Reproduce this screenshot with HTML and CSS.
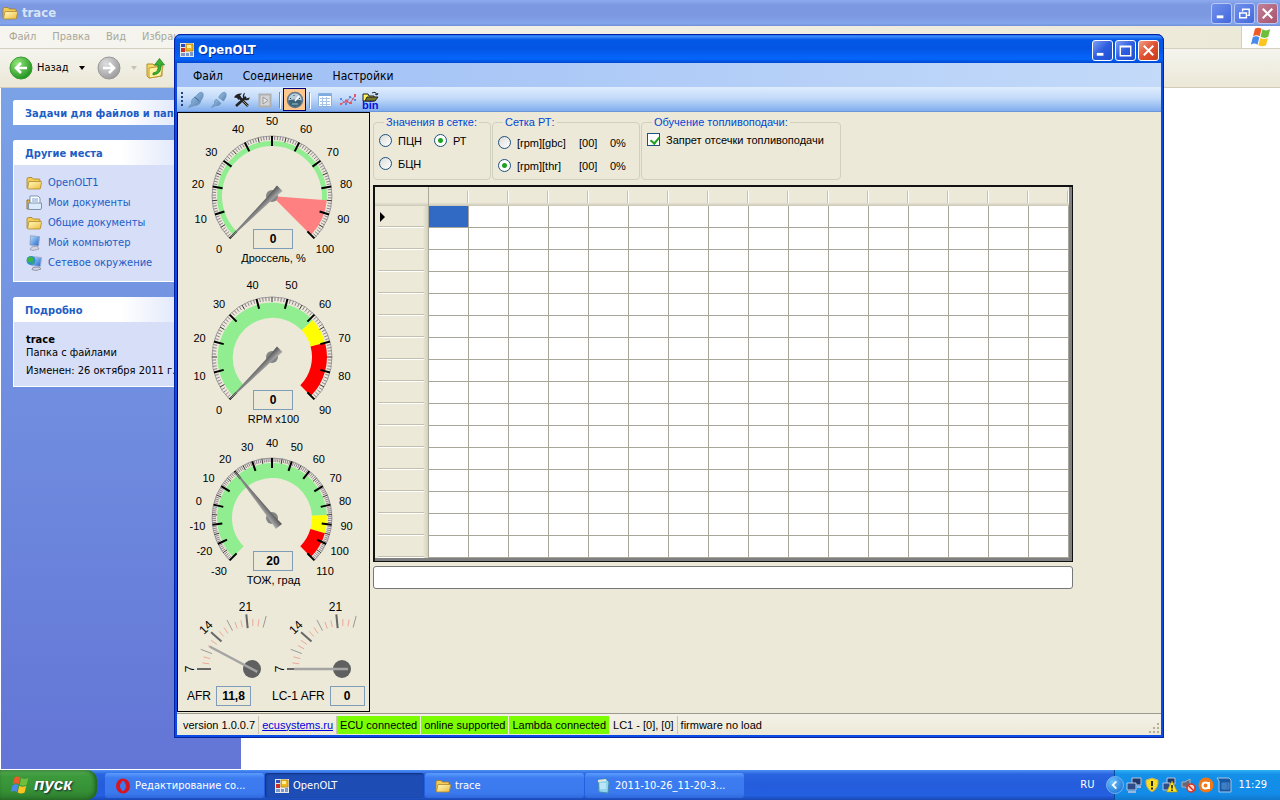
FILE: index.html
```html
<!DOCTYPE html>
<html lang="ru">
<head>
<meta charset="utf-8">
<title>OpenOLT</title>
<link rel="stylesheet" href="styles.css">
</head>
<body>
<svg class="defs" aria-hidden="true">
  <defs>
    <linearGradient id="gFold" x1="0" y1="0" x2="1" y2="1"><stop offset="0" stop-color="#fffbc4"/><stop offset="1" stop-color="#eebc3c"/></linearGradient>
    <linearGradient id="gNeedle" x1="0" y1="0" x2="0" y2="1"><stop offset="0" stop-color="#b4b4b4"/><stop offset="1" stop-color="#505050"/></linearGradient>
    <linearGradient id="gScreen" x1="0" y1="0" x2="1" y2="1"><stop offset="0" stop-color="#bfe2ff"/><stop offset="1" stop-color="#1c64cc"/></linearGradient>
    <linearGradient id="gPlug" x1="0" y1="0" x2="1" y2="1"><stop offset="0" stop-color="#a9c8e6"/><stop offset="1" stop-color="#4d7eb0"/></linearGradient>
    <radialGradient id="gGreen" cx=".35" cy=".3" r=".8"><stop offset="0" stop-color="#92e878"/><stop offset="1" stop-color="#168a16"/></radialGradient>
    <radialGradient id="gGray" cx=".35" cy=".3" r=".8"><stop offset="0" stop-color="#dedede"/><stop offset="1" stop-color="#969696"/></radialGradient>
  </defs>
  <symbol id="folder" viewBox="0 0 16 16"><path d="M1 4q0-1.500 1.500-1.500h3.500l1.500 1.500h5.500q1 0 1 1v8.500H2q-1 0-1-1z" fill="#f2cc58" stroke="#a67c20" stroke-width=".8"/><path d="M3 6.500h12q.8 0 .6 1l-1.200 5.500q-.2 1-1 1H2.500q-1 0-.9-1z" fill="url(#gFold)" stroke="#b08828" stroke-width=".8"/></symbol>
  <symbol id="docs" viewBox="0 0 16 16"><path d="M1 5h3v9H1z" fill="#e8bb48" stroke="#9a741e"/><path d="M4 1h8l2 2v9H4z" fill="#fff" stroke="#7d92b5"/><path d="M6 4h6M6 6h6" stroke="#78a0d8"/><path d="M2.500 8h13v5q0 1.500-1.500 1.500H4q-1.500 0-1.500-1.500z" fill="#dcebfa" stroke="#8093ae"/></symbol>
  <symbol id="computer" viewBox="0 0 16 16"><path d="M4.500 .7l9 1-1 9.300-8.500-1z" fill="url(#gScreen)" stroke="#8ea6cc"/><path d="M6 12l5-1 2 3-6 1.500-3-1z" fill="#d4d4e4" stroke="#8e8ea4" stroke-width=".7"/></symbol>
  <symbol id="network" viewBox="0 0 16 16"><path d="M5 1.500l10.500 1-1 9-9-1z" fill="url(#gScreen)" stroke="#a0b2d0"/><circle cx="5" cy="5.500" r="4.500" fill="#2a8fd0"/><path d="M2 3q3-3 5 0t-2 4-4-1zM5 8l3-1-1 2z" fill="#3fb43f"/><path d="M7 12.500l6-.5 2 2-5 1.500-4-1z" fill="#d4d4e4" stroke="#77778c" stroke-width=".7"/></symbol>
  <symbol id="formicon" viewBox="0 0 14 14"><path d="M0 0h14v14H0z" fill="#e8e8e8"/><path d="M1 1h4v3H1z" fill="#2c50b8"/><path d="M1 5h4v4H1z" fill="#c83028"/><path d="M6 1h7v7H6z" fill="#f0b820" stroke="#b88410" stroke-width=".8"/><path d="M7 2h4v3H7z" fill="#fff09c"/><path d="M1 10h4v3H1zM6 10h3v3H6zM10 9h3v4h-3z" fill="#7c98cc"/></symbol>
  <symbol id="flag" viewBox="0 0 20 20"><path d="M4.500 2.500q3-2 6 0L8.800 9.300q-3-2-6 0z" fill="#ee5a28"/><path d="M11.300 3q3 2 7 0L16.600 9.800q-3.500 2-7 0z" fill="#6cc03c"/><path d="M2.500 10.300q3-2 6 0L6.800 17q-3-2-6 0z" fill="#4a8ae8"/><path d="M9.300 10.800q3.500 2 7 0L14.600 17.500q-3.500 2-7 0z" fill="#fcc420"/></symbol>
  <symbol id="plug" viewBox="0 0 18 18"><path d="M1.500 16.500l3-4q-.5-4 2.500-6 2-1 3-2.500 2-2.500 4.500-3l1.500 1.500q1 3-2 7-.500 4-5 5-3 0-4 1z" fill="url(#gPlug)" stroke="#6b93bc" stroke-width=".8"/><path d="M7.500 6.500q3 .5 4.500 4" fill="none" stroke="#3c6a98"/></symbol>
</svg>
<main class="desktop">
  <section class="explorer" aria-label="trace">
    <header class="ex-title">
      <svg class="i16"><use href="#folder"/></svg><h1>trace</h1>
      <div class="winbtns"><button class="wb dim" aria-label="Свернуть"><svg viewBox="0 0 20 20"><path d="M5 13.500h7" stroke-width="3"/></svg></button><button class="wb dim" aria-label="Восстановить"><svg viewBox="0 0 20 20"><path d="M8 8V5.500h7V12h-2M5 9.500h7v5H5z" stroke-width="1.500"/></svg></button><button class="wb dim red" aria-label="Закрыть"><svg viewBox="0 0 20 20"><path d="M5 5l10 10m0-10l-10 10" stroke-width="2.200"/></svg></button></div>
    </header>
    <nav class="ex-menu"><span>Файл</span><span>Правка</span><span>Вид</span><span>Избранное</span><div class="throbber"><svg class="i22"><use href="#flag"/></svg></div></nav>
    <div class="ex-tools">
      <button class="back"><svg class="i24" viewBox="0 0 24 24"><circle cx="12" cy="12" r="11" fill="url(#gGreen)" stroke="#3a9a34"/><path d="M18 12H7m5-5l-5 5 5 5" fill="none" stroke="#fff" stroke-width="2.600"/></svg>Назад<i class="caret"></i></button>
      <button class="fwd" aria-label="Вперед"><svg class="i24" viewBox="0 0 24 24"><circle cx="12" cy="12" r="11" fill="url(#gGray)" stroke="#999"/><path d="M6 12h11m-5-5l5 5-5 5" fill="none" stroke="#fff" stroke-width="2.600"/></svg><i class="caret pale"></i></button>
      <button class="up" aria-label="Вверх"><svg class="i22" viewBox="0 0 22 22"><path d="M2 7h6l2 2h7v10l-13 2-2-2z" fill="#f6d868" stroke="#b08c2c"/><path d="M4 11l14-2-2 10-12 2z" fill="#fff2a0" stroke="#c09c34"/><path d="M8 16q6-1 5-8H9.500l5-6.500 5 6.500H16q1 9-8 10z" fill="#38b030" stroke="#1c7a1c" stroke-width=".7"/></svg></button>
    </div>
    <div class="ex-body">
      <aside class="tasks">
        <section class="tp"><h2>Задачи для файлов и папок</h2></section>
        <section class="tp"><h2>Другие места</h2>
          <ul class="places">
            <li><a href="#"><svg class="i16"><use href="#folder"/></svg>OpenOLT1</a></li>
            <li><a href="#"><svg class="i16"><use href="#docs"/></svg>Мои документы</a></li>
            <li><a href="#"><svg class="i16"><use href="#folder"/></svg>Общие документы</a></li>
            <li><a href="#"><svg class="i16"><use href="#computer"/></svg>Мой компьютер</a></li>
            <li><a href="#"><svg class="i16"><use href="#network"/></svg>Сетевое окружение</a></li>
          </ul></section>
        <section class="tp"><h2>Подробно</h2><div class="details"><b>trace</b><span>Папка с файлами</span><p>Изменен: 26 октября 2011 г.,</p></div></section>
      </aside>
    </div>
  </section>

  <section class="app" aria-label="OpenOLT">
    <header class="app-title"><svg class="i14"><use href="#formicon"/></svg><h1>OpenOLT</h1>
      <div class="winbtns"><button class="wb" aria-label="Свернуть"><svg viewBox="0 0 20 20"><path d="M4 14h7" stroke-width="3"/></svg></button><button class="wb" aria-label="Развернуть"><svg viewBox="0 0 20 20"><path d="M4.500 5.500h11v10h-11zM4.500 6h11" stroke-width="1.500"/></svg></button><button class="wb red" aria-label="Закрыть"><svg viewBox="0 0 20 20"><path d="M5 5l10 10m0-10l-10 10" stroke-width="2.200"/></svg></button></div>
    </header>
    <nav class="app-menu"><span>Файл</span><span>Соединение</span><span>Настройки</span></nav>
    <div class="app-tools">
      <i class="grip"></i>
      <button aria-label="Подключить"><svg class="i18"><use href="#plug"/></svg></button>
      <button aria-label="Отключить"><svg class="i18" viewBox="0 0 18 18"><path d="M1.500 16.500l3-4q-.5-3 2-4.500l4.500 4.500q-2 2.500-5 2.200-1.500 0-2 1z" fill="url(#gPlug)" stroke="#6b93bc" stroke-width=".8"/><path d="M8.500 6.500q2.500-5 6-5.500l1.500 1.500q1 3-2.500 7.500z" fill="url(#gPlug)" stroke="#6b93bc" stroke-width=".8"/></svg></button>
      <button aria-label="Инструменты"><svg class="i18" viewBox="0 0 18 18"><path d="M3 15L13 6M6 6l9 9" stroke="#222" stroke-width="2.500"/><path d="M1 6.500Q3 2 9 2.500L7 4.500l1.500 2-3 2.500-1.500-2zM12 1.500l-1 4 2 2 4-1q-1 3.500-5 2.500l-2-2q-1-4 2-5.500z" fill="#222"/><path d="M10 10l5 5" stroke="#a59158"/></svg></button>
      <button aria-label="Запись"><svg class="i18" viewBox="0 0 18 18"><path d="M3.500 3.500h11v12h-11z" fill="#d4d4d4" stroke="#b0b0b0" stroke-width="2"/><path d="M7 6l5 3.500-5 3.500z" fill="#e4e4e4" stroke="#999"/></svg></button>
      <i class="sep"></i>
      <button class="on" aria-label="Приборы"><svg class="i18" viewBox="0 0 18 18"><circle cx="9" cy="9" r="7.500" fill="#b6ccd8" stroke="#62788a" stroke-width="1.500"/><path d="M2 9.500q7-2 14 0-1 6.500-7 6.500t-7-6.500z" fill="#3e6278"/><path d="M9 10l4-5" stroke="#fff" stroke-width="1.500"/><path d="M4 7l1 1m3-4v1m5 3l1-1" stroke="#345"/><path d="M6 13h6" stroke="#9cc" /></svg></button>
      <i class="sep"></i>
      <button aria-label="Таблица"><svg class="i18" viewBox="0 0 18 18"><path d="M2.500 2.500h13v13h-13z" fill="#fff" stroke="#8ab0dc"/><path d="M3 4h12" stroke="#7cacdf" stroke-width="2"/><path d="M4 7.500h10M4 10.500h10M4 13.500h10M6.500 6v9M10.500 6v9" stroke="#a8c4e4"/></svg></button>
      <button aria-label="График"><svg class="i18" viewBox="0 0 18 18"><path d="M2 8l5 5 4-7 5 3" fill="none" stroke="#8094dc"/><path d="M2 13l5-3 4 2 5-7" fill="none" stroke="#e05060"/><path d="M1 7h2v2H1zM6 12h2v2H6zM10 5h2v2h-2zM15 8h2v2h-2z" fill="#5c84e0"/><path d="M1 12h2v2H1zM6 8.500h3v3H6zM10 11h3v2h-3zM15 3h2v3h-2z" fill="#e65666"/></svg></button>
      <button aria-label="bin" class="bin"><svg class="i18" viewBox="0 0 18 18"><path d="M1 10V3h5l1 2h5v5z" fill="#fff25a" stroke="#222"/><path d="M3 10l2-4h11l-3 4z" fill="#75752a" stroke="#222"/><path d="M10 2q4-2 5 2m-2-1l2 1 1-2" fill="none" stroke="#222"/></svg><span>bin</span></button>
    </div>
    <div class="app-body">
      <aside class="gauges">
        <figure class="gauge"><svg class="dial" data-min="0" data-max="100" data-step="10" data-value="0" data-bands="50,0,85,#90ee90;5,85,100,#ff8080"></svg><output>0</output><figcaption>Дроссель, %</figcaption></figure>
        <figure class="gauge"><svg class="dial" data-min="0" data-max="90" data-step="10" data-value="0" data-bands="40,0,61,#90ee90;40,61,70,#ffff00;40,70,90,#ff0000"></svg><output>0</output><figcaption>RPM x100</figcaption></figure>
        <figure class="gauge"><svg class="dial" data-min="-30" data-max="110" data-step="10" data-value="20" data-bands="40,-30,85,#90ee90;40,85,95,#ffff00;40,95,110,#ff0000"></svg><output>20</output><figcaption>ТОЖ, град</figcaption></figure>
        <div class="afr-row">
          <div class="afr"><svg class="fan" data-angle="208"></svg><p><span>AFR</span><output>11,8</output></p></div>
          <div class="afr"><svg class="fan" data-angle="180"></svg><p><span>LC-1 AFR</span><output>0</output></p></div>
        </div>
      </aside>
      <div class="work">
        <form class="groups">
          <fieldset class="g1"><legend>Значения в сетке:</legend>
            <label><input type="radio" name="val">ПЦН</label><label><input type="radio" name="val" checked>РТ</label><label><input type="radio" name="val">БЦН</label></fieldset>
          <fieldset class="g2"><legend>Сетка РТ:</legend>
            <label><input type="radio" name="mesh">[rpm][gbc]</label><span>[00]</span><span>0%</span>
            <label><input type="radio" name="mesh" checked>[rpm][thr]</label><span>[00]</span><span>0%</span></fieldset>
          <fieldset class="g3"><legend>Обучение топливоподачи:</legend><label><input type="checkbox" checked>Запрет отсечки топливоподачи</label></fieldset>
        </form>
        <div class="gridbox"><table class="grid"><thead></thead><tbody></tbody></table></div>
        <input class="line" type="text" aria-label="Сообщение">
      </div>
    </div>
    <footer class="status">
      <span>version 1.0.0.7</span><a href="#">ecusystems.ru</a><span class="ok">ECU connected</span><span class="ok">online supported</span><span class="ok">Lambda connected</span><span>LC1 - [0], [0]</span><span>firmware no load</span>
      <svg class="size" viewBox="0 0 12 12"><path d="M9 1h2v2H9zM5 5h2v2H5zM9 5h2v2H9zM1 9h2v2H1zM5 9h2v2H5zM9 9h2v2H9z" fill="#b5ae98"/></svg>
    </footer>
  </section>
</main>
<footer class="taskbar">
  <button class="start"><svg class="i20"><use href="#flag"/></svg>пуск</button>
  <div class="apps">
    <button><svg class="i16" viewBox="0 0 16 16"><ellipse cx="8" cy="8" rx="5" ry="5.500" fill="none" stroke="#d81420" stroke-width="4"/><ellipse cx="8" cy="8" rx="2.300" ry="5" fill="#3c7cec"/></svg>Редактирование со...</button>
    <button class="active"><svg class="i14"><use href="#formicon"/></svg>OpenOLT</button>
    <button><svg class="i16"><use href="#folder"/></svg>trace</button>
    <button><svg class="i16" viewBox="0 0 16 16"><path d="M3 2l8-1 3 3-1 11-9-1z" fill="#8fd4ec" stroke="#4a8cb4"/><path d="M3 2l8-1v2L3 4z" fill="#e8e8d8"/><path d="M5 6h6M5 8h6M5 10h6" stroke="#e4f8fc"/></svg>2011-10-26_11-20-3...</button>
  </div>
  <span class="lang">RU</span>
  <div class="tray">
    <button class="chev" aria-label="Показать значки"><svg viewBox="0 0 18 18"><path d="M10.500 5l-4 4 4 4" fill="none" stroke="#fff" stroke-width="2"/></svg></button>
    <svg class="i16" viewBox="0 0 16 16"><path d="M6 1h9v7H6z" fill="#203868" stroke="#b8c4e0"/><path d="M1 6h9v7H1z" fill="#304c88" stroke="#b8c4e0"/><path d="M2 15h8M11 10h4" stroke="#c4c8dc" stroke-width="1.500"/></svg>
    <svg class="i16" viewBox="0 0 16 16"><path d="M8 1l6 2q1 8-6 12Q1 11 2 3z" fill="#f8dc20" stroke="#b4a470"/><path d="M8 4v5m0 1.500v2" stroke="#222" stroke-width="2"/></svg>
    <svg class="i16" viewBox="0 0 16 16"><path d="M5 1h8v6H5z" fill="#203868" stroke="#b8c4e0"/><path d="M1 6h7v7H1z" fill="#304c88" stroke="#b8c4e0"/><path d="M10 4l5.500 11h-11z" fill="#fce420" stroke="#b09010" stroke-width=".7"/><path d="M10 8v3.500m0 1v1.500" stroke="#111" stroke-width="1.500"/></svg>
    <svg class="i16" viewBox="0 0 16 16"><path d="M2 5h3l5-3v11l-5-3H2z" fill="#686878" stroke="#b0b0b8"/><circle cx="11" cy="11" r="4" fill="#f4d8d0" stroke="#d83020" stroke-width="1.500"/><path d="M8 8l6 6" stroke="#d83020" stroke-width="1.500"/></svg>
    <svg class="i16" viewBox="0 0 16 16"><circle cx="8" cy="8" r="7.500" fill="#f07818"/><circle cx="7.500" cy="8.500" r="3" fill="none" stroke="#fff" stroke-width="2"/><path d="M11 5v7" stroke="#fff" stroke-width="2"/></svg>
    <svg class="i16" viewBox="0 0 16 16"><path d="M1 1h12l2 2v12H3V4z" fill="#1858a4" stroke="#a4c8e8"/><path d="M6 6h7v6H6zM8 6v6m2-6v6M6 8h7m-7 2h7" stroke="#5c9cdc" fill="none" stroke-width=".7"/></svg>
    <time>11:29</time>
  </div>
</footer>
<script src="panel.js"></script>
</body>
</html>
```
FILE: styles.css
```css
* { box-sizing: border-box; }
body { margin: 0; height: 100vh; display: flex; flex-direction: column; overflow: hidden; background: #fff; font: 11px/14px "DejaVu Sans Condensed", "Noto Sans", sans-serif; color: #000; }
h1, h2, p, ul, figure { margin: 0; padding: 0; }
button { font: inherit; color: inherit; border: 0; padding: 0; background: none; display: flex; align-items: center; }
svg { flex: none; display: block; }
.defs { position: absolute; width: 0; height: 0; }
.i14 { width: 14px; height: 14px; }
.i16 { width: 16px; height: 16px; }
.i18 { width: 18px; height: 18px; }
.i20 { width: 20px; height: 20px; }
.i22 { width: 22px; height: 22px; }
.i24 { width: 24px; height: 24px; }
.desktop { flex: 1; position: relative; min-height: 0; display: flex; }

/* Explorer window */
.explorer { flex: 1; display: flex; flex-direction: column; min-width: 0; }
.ex-title { height: 26px; display: flex; align-items: center; gap: 4px; padding: 0 2px; color: #d8e4f8; background: linear-gradient(#8eaaf0, #7b98e0 20%, #7c98e0 60%, #84a5ec 90%, #7090d8); }
.ex-title h1 { font: bold 13px/16px "DejaVu Sans Condensed", sans-serif; }
.winbtns { margin-left: auto; display: flex; gap: 2px; }
.wb { width: 21px; height: 21px; border: 1px solid #fff; border-radius: 3px; background: linear-gradient(135deg, #7ea0f0, #2c5ce0 50%, #2050d0); justify-content: center; }
.wb svg { width: 19px; height: 19px; fill: none; stroke: #fff; }
.wb.red { background: linear-gradient(135deg, #f0a088, #e05030 50%, #c83c18); }
.wb.dim { border-color: #b8c8f4; background: linear-gradient(135deg, #7090ec, #4468dc); }
.wb.dim.red { background: linear-gradient(135deg, #c08098, #a8546c); }
.ex-menu { height: 23px; display: flex; align-items: center; gap: 16px; padding-left: 9px; color: #aaa899; background: linear-gradient(90deg, #f6f5f0, #ece9d8); border-bottom: 1px solid #d4d0c0; }
.throbber { margin-left: auto; width: 39px; align-self: stretch; display: flex; align-items: center; justify-content: center; background: #fff; border-left: 1px solid #d4d0c0; }
.ex-tools { height: 39px; display: flex; align-items: center; gap: 16px; padding-left: 9px; background: linear-gradient(#f5f4ee, #ebe8d7); border-bottom: 1px solid #cfcbb8; }
.ex-tools button { gap: 4px; }
.caret { border: 3px solid transparent; border-top: 4px solid #000; border-bottom: 0; margin-left: 6px; }
.caret.pale { border-top-color: #c4c2b6; }
.ex-tools .fwd { margin-left: -4px; }
.ex-tools .up { margin-left: -8px; }
.ex-body { flex: 1; display: flex; border-left: 1px solid #fff; border-bottom: 1px solid #fff; }
.tasks { width: 240px; padding: 12px; display: flex; flex-direction: column; gap: 15px; background: linear-gradient(#7ba2e7, #6375d6); }
.tp { border: 1px solid #fff; border-width: 0 1px 1px; border-radius: 3px 3px 0 0; background: #d6dff7; }
.tp h2 { height: 25px; padding: 0 12px; margin: 0 -1px; font: bold 11px/28px "DejaVu Sans Condensed", sans-serif; color: #215dc6; background: linear-gradient(90deg, #fff 50%, #c7d4f7); border-radius: 3px 3px 0 0; white-space: nowrap; overflow: hidden; }
.tp:first-child { border-bottom: 0; }
.places { list-style: none; padding: 8px 12px; }
.places a { display: flex; align-items: center; gap: 6px; height: 20px; color: #215dc6; text-decoration: none; }
.details { padding: 11px 12px 9px; display: flex; flex-direction: column; line-height: 13px; white-space: nowrap; }
.details p { margin-top: 5px; }

/* Application window */
.app { position: absolute; left: 174px; right: 116px; top: 34px; bottom: 32px; display: flex; flex-direction: column; border: 3px solid #0a4ce4; border-top: 0; border-radius: 7px 7px 0 0; outline: 1px solid #0422a4; outline-offset: -1px; background: #ece9d8; font-family: "Liberation Sans", sans-serif; }
.app-title { height: 29px; margin: 0 -3px; padding: 3px 5px 0 6px; display: flex; align-items: center; gap: 4px; color: #fff; border-radius: 7px 7px 0 0; background: linear-gradient(#0a52dc, #3c8cfc 8%, #0458e6 20%, #0455e4 50%, #0466fc 85%, #0048d0); }
.app-title h1 { font: bold 13px/16px "DejaVu Sans Condensed", sans-serif; text-shadow: 1px 1px #0a2c90; }
.app-menu { height: 24px; display: flex; align-items: center; gap: 20px; padding: 2px 16px 0; font: 12px/16px "DejaVu Sans Condensed", sans-serif; background: linear-gradient(90deg, #9ebef5, #c3daf9); }
.app-tools { height: 25px; display: flex; align-items: center; padding-left: 3px; background: linear-gradient(#deecfd, #c2dafa 45%, #83aeed 95%, #5a86d0); }
.app-tools button { width: 23px; height: 23px; justify-content: center; }
.app-tools .on { border: 1px solid #000080; background: #ffc78c; }
.app-tools .bin { position: relative; }
.bin span { position: absolute; left: 3px; bottom: 0; font: bold 11px/11px "Liberation Sans", sans-serif; color: #0010e0; }
.grip { width: 2px; height: 15px; margin: 0 1px; background: repeating-linear-gradient(#274176 0 2px, transparent 2px 4px); }
.sep { width: 1px; height: 16px; margin: 0 3px; background: #6a8ccb; box-shadow: 1px 1px #fff; }
.app-body { flex: 1; display: flex; min-height: 0; }
.gauges { width: 193px; border: 1px solid #000; display: flex; flex-direction: column; margin-bottom: 1px; }
.gauge { position: relative; height: 161px; text-align: center; }
.dial { width: 100%; height: 138px; overflow: visible; font: 11px "Liberation Sans", sans-serif; }
.dial text, .fan text { text-anchor: middle; }
output { display: block; border: 1px solid #7f9db9; text-align: center; font: bold 12px/18px "Liberation Sans", sans-serif; }
.gauge output { position: absolute; left: 75px; top: 116px; width: 40px; height: 20px; }
.gauge figcaption { font-size: 11px; line-height: 14px; }
.afr-row { flex: 1; display: flex; }
.afr { flex: 0 0 90px; display: flex; flex-direction: column; }
.fan { width: 90px; height: 90px; overflow: visible; font: 12px "Liberation Sans", sans-serif; }
.afr p { display: flex; align-items: center; gap: 5px; padding-left: 9px; white-space: nowrap; font-size: 12px; }
.afr:last-child p { padding-left: 4px; }
.afr output { width: 35px; height: 20px; flex: none; }
.work { padding: 3px 0 0 3px; flex: 1; min-width: 0; }
.groups { display: flex; gap: 1px; align-items: stretch; }
fieldset { margin: 0; border: 1px solid #d0d0bf; border-radius: 4px; min-width: 0; height: 65px; padding: 0 5px; font-size: 11px; }
legend { color: #0046d5; margin-left: 5px; padding: 0 2px; line-height: 14px; white-space: nowrap; }
fieldset label { display: flex; align-items: center; gap: 6px; white-space: nowrap; }
.g1 { width: 118px; display: grid; grid-template-columns: 55px auto; grid-auto-rows: 23px; }
.g2 { width: 148px; padding-top: 2px; display: grid; grid-template-columns: 81px 31px auto; grid-auto-rows: 23px; align-items: center; }
.g3 { width: 200px; }
.g3 label { height: 21px; }
fieldset input { appearance: none; margin: 0; width: 13px; height: 13px; flex: none; border: 1px solid #1c5180; background: linear-gradient(135deg, #dcdcd7, #fff); }
input[type=radio] { border-radius: 50%; }
input[type=radio]:checked { background: radial-gradient(circle, #21a121 0 2px, #fff 3px); }
input[type=checkbox] { background: #fff; position: relative; }
input[type=checkbox]:checked::after { content: ""; position: absolute; left: 4px; top: 1px; width: 4px; height: 7px; border: solid #21a121; border-width: 0 2px 2px 0; rotate: 40deg; }
.gridbox { width: fit-content; margin-top: 5px; border: 2px solid #111; border-right-width: 1px; border-bottom-width: 1px; padding: 0 3px 3px 0; background: #808080; }
.grid { border-spacing: 0; table-layout: fixed; width: 694px; background: #fff; }
.grid th, .grid td { padding: 0; }
.grid thead th { height: 19px; background: linear-gradient(90deg, #c4c0ae 1px, #fff 1px) right 4px / 2px 12px no-repeat, linear-gradient(#ece9d8 80%, #cdc9b8); }
.grid th:first-child { width: 54px; border-right: 1px solid #aca899; }
.grid thead th:first-child { background: linear-gradient(#ece9d8 80%, #cdc9b8); }
.grid tbody th { height: 22px; background: linear-gradient(#c4c0ae 1px, #fff 1px) 3px bottom / 46px 2px no-repeat, linear-gradient(90deg, #ece9d8 90%, #d4d0be); }
.grid td { border-right: 1px solid #a8a698; border-bottom: 1px solid #a8a698; }
.grid .sel { background: #316ac5; }
.mark { display: block; margin-left: 5px; width: 5px; height: 10px; }
.line { display: block; width: 700px; height: 23px; margin-top: 4px; border: 1px solid #777; border-radius: 3px; background: #fff; }
.status { height: 22px; display: flex; align-items: center; white-space: nowrap; border-top: 1px solid #9c9a8c; background: linear-gradient(#f4f2e8, #ece9d8); }
.status > span, .status > a { padding: 1px 3px 0; height: 18px; line-height: 16px; border-right: 1px solid #c9c5b2; }
.status > span:first-child { padding-left: 6px; }
.status a { color: #0000e0; }
.status > .ok { background: #7cfc00; border-right-color: #ece9d8; }
.status > span:last-of-type { border-right: 0; }
.size { width: 12px; height: 12px; margin: auto 1px 1px auto; }

/* Taskbar */
.taskbar { height: 30px; display: flex; align-items: stretch; color: #fff; background: linear-gradient(#4c90f4, #2a64e0 14%, #245cdc 50%, #2460e0 85%, #1a48b4); }
.start { width: 97px; padding-left: 10px; gap: 4px; border-radius: 0 10px 10px 0; font: italic bold 17px/24px "Liberation Sans", sans-serif; text-shadow: 1px 1px 2px #123; background: linear-gradient(#5cae5c, #3c9a3c 20%, #359035 70%, #2c782c); box-shadow: inset -2px 0 4px #1e5c1e; }
.apps { flex: 1; display: flex; gap: 1px; padding: 3px 0 2px 8px; }
.apps button { flex: 0 1 159px; min-width: 0; padding-left: 10px; gap: 4px; border-radius: 3px; white-space: nowrap; background: linear-gradient(#5c9cfc, #3c7cf0 20%, #3a7aee 80%, #3068dc); }
.apps .active { background: #1c4cb4; box-shadow: inset 1px 1px 2px #10307c; }
.lang { align-self: center; margin-right: 20px; }
.tray { display: flex; align-items: center; gap: 2px; padding-right: 13px; background: linear-gradient(#30b0f4, #1490e8 14%, #128ce8 80%, #1078cc); border-left: 1px solid #0c4c9c; }
.chev { width: 18px; height: 18px; margin-left: -9px; border-radius: 50%; background: radial-gradient(circle at 35% 30%, #6cc0fc, #1068d0); border: 1px solid #6cb4f4; }
.tray time { margin-left: 4px; }
```
FILE: panel.js
```js
const rad = a => a * Math.PI / 180;
const pt = (cx, cy, r, a) => (cx + r * Math.cos(rad(a))).toFixed(1) + ' ' + (cy + r * Math.sin(rad(a))).toFixed(1);
const tick = (cx, cy, a, r1, r2, color, w) =>
  `<path d="M${pt(cx, cy, r1, a)}L${pt(cx, cy, r2, a)}" stroke="${color}" stroke-width="${w}"/>`;

// Round dials: a 270 degree scale that starts at the lower left
document.querySelectorAll('.dial').forEach(svg => {
  const { min, max, step, value, bands } = svg.dataset;
  const lo = +min, hi = +max, st = +step, cx = 94, cy = 83;
  const ang = v => 135 + (v - lo) / (hi - lo) * 270;
  let out = '';
  bands.split(';').forEach(b => {
    const [r, from, to, color] = b.split(',');
    const a = ang(+from), z = ang(+to), big = z - a > 180 ? 1 : 0;
    out += `<path fill="${color}" d="M${pt(cx, cy, 55, a)}A55 55 0 ${big} 1 ${pt(cx, cy, 55, z)}L${pt(cx, cy, r, z)}A${r} ${r} 0 ${big} 0 ${pt(cx, cy, r, a)}Z"/>`;
  });
  out += `<path fill="none" stroke="#a0a0a0" d="M${pt(cx, cy, 60, 135)}A60 60 0 1 1 ${pt(cx, cy, 60, 45)}"/>`;
  for (let v = lo; v <= hi; v += 1) {
    const a = ang(v);
    if ((v - lo) % st === 0) continue;
    out += (v - lo) % 5 === 0 ? tick(cx, cy, a, 55, 60, '#333', 1) : tick(cx, cy, a, 56, 60, '#8c8090', 1);
  }
  for (let v = lo; v <= hi; v += st) {
    const a = ang(v), [x, y] = pt(cx, cy, 75, a).split(' ');
    out += tick(cx, cy, a, 50, 60, '#000', 2) + `<text x="${x}" y="${+y + 4}">${v}</text>`;
  }
  out += `<circle cx="${cx}" cy="${cy}" r="6" fill="#858585"/>
    <path fill="url(#gNeedle)" transform="rotate(${ang(+value)} ${cx} ${cy})" d="M${cx + 59} ${cy - 0.5}V${cy + 0.5}L${cx} ${cy + 3}L${cx - 11} ${cy + 4}V${cy - 4}L${cx} ${cy - 3}Z"/>`;
  svg.innerHTML = out;
});

// Air-fuel ratio fans
document.querySelectorAll('.fan').forEach(svg => {
  const cx = 74, cy = 73;
  let out = '';
  for (let i = 0; i <= 15; i++) {
    const a = 180 + i * 7;
    if (i % 6 === 0) out += tick(cx, cy, a, 41, 55, '#666', 2);
    else if (i % 3 === 0) out += tick(cx, cy, a, 43, 55, '#999', 1);
    else out += tick(cx, cy, a, 43, 50, '#eca898', 1);
  }
  [[7, -90, 180], [14, -45, 222], [21, 0, 264]].forEach(([n, r, a]) => {
    const [x, y] = pt(cx, cy, 62, a).split(' ');
    out += `<text transform="translate(${x} ${y}) rotate(${r})" y="4">${n}</text>`;
  });
  out += `<circle cx="${cx}" cy="${cy}" r="9" fill="#606060"/>` + tick(cx, cy, +svg.dataset.angle, -6, 48, '#a4a4a4', 2.5);
  svg.innerHTML = out;
});

// Empty 16 x 16 calibration grid
const cells = n => '<th></th>'.repeat(n);
document.querySelector('.grid thead').innerHTML = `<tr>${cells(17)}</tr>`;
document.querySelector('.grid tbody').innerHTML = Array.from({ length: 16 }, (_, r) =>
  `<tr><th>${r ? '' : '<svg class="mark" viewBox="0 0 5 10"><path d="M0 0l5 5-5 5z"/></svg>'}</th><td${r ? '' : ' class="sel"'}></td>${'<td></td>'.repeat(15)}</tr>`).join('');
```
